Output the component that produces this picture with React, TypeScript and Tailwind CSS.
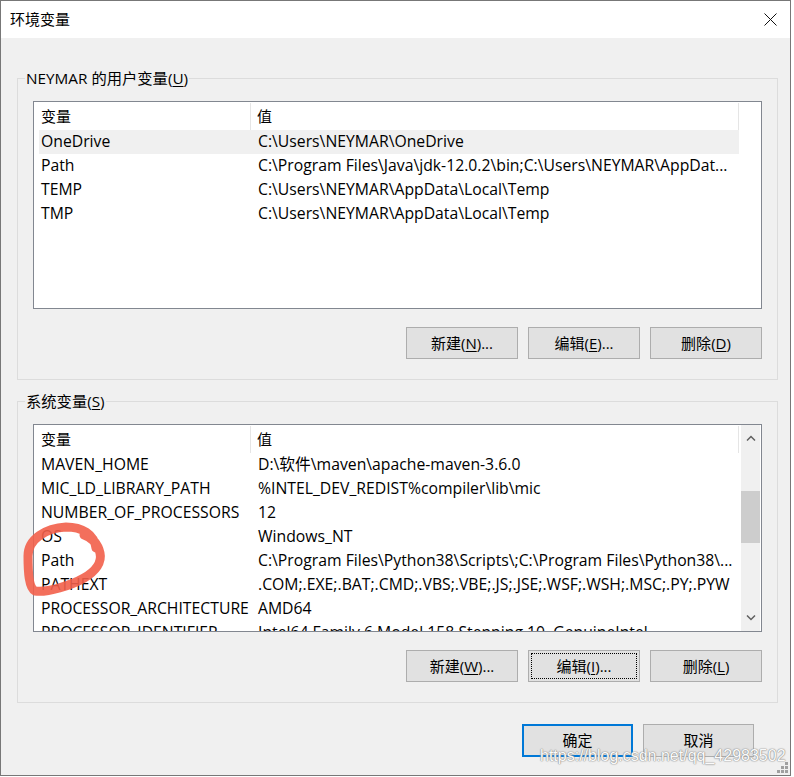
import React from "react";

const font = { fontFamily: '"Open Sans", "Noto Sans CJK SC", sans-serif' };

type Row = [string, string];

const userRows: Row[] = [
  ["OneDrive", "C:\\Users\\NEYMAR\\OneDrive"],
  ["Path", "C:\\Program Files\\Java\\jdk-12.0.2\\bin;C:\\Users\\NEYMAR\\AppDat..."],
  ["TEMP", "C:\\Users\\NEYMAR\\AppData\\Local\\Temp"],
  ["TMP", "C:\\Users\\NEYMAR\\AppData\\Local\\Temp"],
];

const sysRows: Row[] = [
  ["MAVEN_HOME", "D:\\软件\\maven\\apache-maven-3.6.0"],
  ["MIC_LD_LIBRARY_PATH", "%INTEL_DEV_REDIST%compiler\\lib\\mic"],
  ["NUMBER_OF_PROCESSORS", "12"],
  ["OS", "Windows_NT"],
  ["Path", "C:\\Program Files\\Python38\\Scripts\\;C:\\Program Files\\Python38\\..."],
  ["PATHEXT", ".COM;.EXE;.BAT;.CMD;.VBS;.VBE;.JS;.JSE;.WSF;.WSH;.MSC;.PY;.PYW"],
  ["PROCESSOR_ARCHITECTURE", "AMD64"],
  ["PROCESSOR_IDENTIFIER", "Intel64 Family 6 Model 158 Stepping 10, GenuineIntel"],
];

function Btn({ label, acc, suffix, focus }: { label: string; acc: string; suffix: string; focus?: boolean }) {
  return (
    <button
      className="relative w-[112px] h-[32px] bg-[#e1e1e1] border border-[#adadad] text-[15px] text-black flex items-center justify-center"
      style={font}
    >
      {focus && <span className="absolute inset-[2px] border border-dotted border-black" />}
      <span>
        {label}(<span className="underline underline-offset-2">{acc}</span>){suffix}
      </span>
    </button>
  );
}

function ListView({ rows, selected, scroll }: { rows: Row[]; selected?: number; scroll?: boolean }) {
  return (
    <div className="relative h-[208px] w-full border border-[#828790] bg-white overflow-hidden flex">
      <div className="flex-1 pl-[5px] overflow-hidden">
        <div className="flex h-[28px] items-center w-[700px] text-[15px]">
          <div className="w-[212px] pl-[2px] h-[27px] pt-[1px] flex items-center border-r border-[#e5e5e5]">变量</div>
          <div className="flex-1 pl-[6px] h-[27px] pt-[1px] flex items-center border-r border-[#e5e5e5]">值</div>
        </div>
        {rows.map(([k, v], i) => (
          <div
            key={k}
            className={`flex h-[24px] items-center w-[700px] whitespace-nowrap text-[15.75px] ${
              i === selected ? "bg-[#f0f0f0]" : ""
            }`}
          >
            <div className="w-[212px] pl-[2px] shrink-0">{k}</div>
            <div className="pl-[7px] flex-1 overflow-visible">{v}</div>
          </div>
        ))}
      </div>
      {scroll && (
        <div className="w-[19px] shrink-0 mr-[1px] bg-[#f0f0f0] flex flex-col items-center">
          <div className="h-[26px] w-full flex items-center justify-center">
            <svg width="10" height="6" viewBox="0 0 10 6">
              <polyline points="1,5.5 5,1.5 9,5.5" fill="none" stroke="#606060" strokeWidth="1.5" />
            </svg>
          </div>
          <div className="h-[40px]" />
          <div className="h-[52px] w-full bg-[#cdcdcd]" />
          <div className="flex-1" />
          <div className="h-[26px] w-full flex items-center justify-center">
            <svg width="10" height="6" viewBox="0 0 10 6">
              <polyline points="1,0.5 5,4.5 9,0.5" fill="none" stroke="#606060" strokeWidth="1.5" />
            </svg>
          </div>
        </div>
      )}
    </div>
  );
}

function Group({
  title,
  acc,
  children,
}: {
  title: string;
  acc: string;
  children: React.ReactNode;
}) {
  return (
    <fieldset className="ml-[16px] w-[761px] border border-[#dcdcdc] px-[15px] pt-[13px] pb-[20px]">
      <legend className="ml-[-8px] px-[1px] text-[15.3px] leading-[20px]" style={font}>
        {title}(<span className="underline underline-offset-2">{acc}</span>)
      </legend>
      {children}
    </fieldset>
  );
}

export default function App() {
  return (
    <div className="w-[794px] h-[777px] bg-white">
      <div
        className="relative w-[791px] h-[776px] border border-[#777777] bg-[#f0f0f0] flex flex-col text-[15px] text-black"
        style={font}
      >
        <div className="h-[37px] bg-white flex items-center justify-between pl-[9px] pr-[13px]">
          <span className="text-[15px]">环境变量</span>
          <svg width="13" height="13" viewBox="0 0 13 13">
            <line x1="0.5" y1="0.5" x2="12.5" y2="12.5" stroke="#111" strokeWidth="1" />
            <line x1="12.5" y1="0.5" x2="0.5" y2="12.5" stroke="#111" strokeWidth="1" />
          </svg>
        </div>

        <div className="mt-[30px]">
          <Group title="NEYMAR 的用户变量" acc="U">
            <ListView rows={userRows} selected={0} />
            <div className="flex justify-end gap-[10px] mt-[18px]">
              <Btn label="新建" acc="N" suffix="..." />
              <Btn label="编辑" acc="E" suffix="..." />
              <Btn label="删除" acc="D" suffix="" />
            </div>
          </Group>
        </div>

        <div className="mt-[11px]">
          <Group title="系统变量" acc="S">
            <ListView rows={sysRows} scroll />
            <div className="flex justify-end gap-[10px] mt-[18px]">
              <Btn label="新建" acc="W" suffix="..." />
              <Btn label="编辑" acc="I" suffix="..." focus />
              <Btn label="删除" acc="L" suffix="" />
            </div>
          </Group>
        </div>

        <div className="flex justify-end gap-[10px] mt-[21px] pr-[36px]">
          <button className="w-[111px] h-[33px] bg-[#e1e1e1] border-2 border-[#0078d7] text-[15px]" style={font}>
            确定
          </button>
          <button className="w-[111px] h-[33px] bg-[#e1e1e1] border border-[#adadad] text-[15px]" style={font}>
            取消
          </button>
        </div>

        {/* red hand-drawn circle */}
        <svg
          className="absolute left-[9px] top-[513px] pointer-events-none blur-[0.7px]"
          width="110"
          height="92"
          viewBox="0 0 110 92"
        >
          <path
            d="M86,34 C84,20 72,13 56,13 C36,14 18,25 18,42 C18,58 19,74 25,77 C37,79 62,71 74,64 C86,57 92,48 90,39 C88,30 83,24 74,21"
            fill="none"
            stroke="#f25f4a"
            strokeWidth="9"
            strokeLinecap="round"
            opacity="0.9"
          />
        </svg>

        {/* watermark */}
        <div
          className="absolute left-[539px] top-[746px] text-[16px] leading-[18px] text-[#fafafa] pointer-events-none whitespace-nowrap [text-shadow:0_0_1px_#8a8a8a,0_0_1px_#8a8a8a,0_0_2px_#b0b0b0]"
          style={{ fontFamily: '"Liberation Sans", Arial, sans-serif' }}
        >
          https://blog.csdn.net/qq_42983502
        </div>

        {/* resize grip */}
        <svg className="absolute right-[1px] bottom-[1px]" width="12" height="12" viewBox="0 0 12 12">
          <rect x="8" y="0" width="3" height="3" fill="#a0a0a0" />
          <rect x="4" y="4" width="3" height="3" fill="#a0a0a0" />
          <rect x="8" y="4" width="3" height="3" fill="#a0a0a0" />
          <rect x="0" y="8" width="3" height="3" fill="#a0a0a0" />
          <rect x="4" y="8" width="3" height="3" fill="#a0a0a0" />
          <rect x="8" y="8" width="3" height="3" fill="#a0a0a0" />
        </svg>
      </div>
    </div>
  );
}
